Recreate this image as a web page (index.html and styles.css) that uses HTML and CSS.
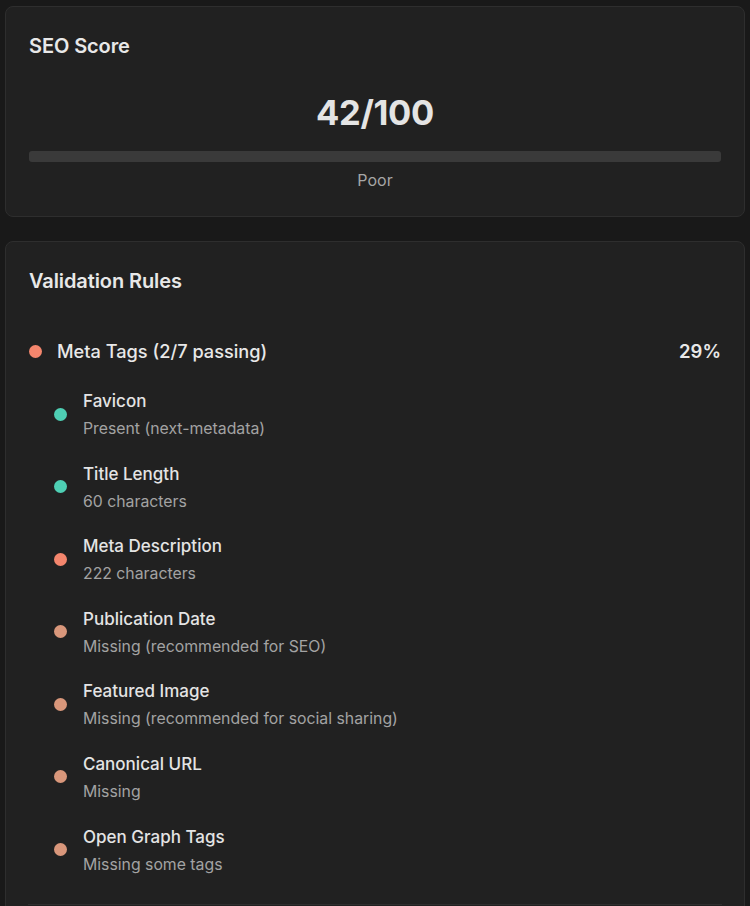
FILE: index.html
```html
<!DOCTYPE html>
<html lang="en">
<head>
<meta charset="utf-8">
<title>SEO</title>
<link rel="stylesheet" href="styles.css">
</head>
<body>
<div class="page">
  <section class="card score-card">
    <h2 class="card-title">SEO Score</h2>
    <div class="score">42/100</div>
    <div class="bar"><div class="bar-fill"></div></div>
    <div class="grade">Poor</div>
  </section>

  <section class="card rules-card">
    <h2 class="card-title">Validation Rules</h2>
    <div class="category">
      <div class="cat-head">
        <span class="dot dot-fail"></span>
        <span class="cat-name">Meta Tags (2/7 passing)</span>
        <span class="cat-pct">29%</span>
      </div>
      <ul class="rules">
        <li class="rule"><span class="dot dot-pass"></span><div class="rule-text"><div class="rule-name">Favicon</div><div class="rule-desc">Present (next-metadata)</div></div></li>
        <li class="rule"><span class="dot dot-pass"></span><div class="rule-text"><div class="rule-name">Title Length</div><div class="rule-desc">60 characters</div></div></li>
        <li class="rule"><span class="dot dot-fail"></span><div class="rule-text"><div class="rule-name">Meta Description</div><div class="rule-desc">222 characters</div></div></li>
        <li class="rule"><span class="dot dot-warn"></span><div class="rule-text"><div class="rule-name">Publication Date</div><div class="rule-desc">Missing (recommended for SEO)</div></div></li>
        <li class="rule"><span class="dot dot-warn"></span><div class="rule-text"><div class="rule-name">Featured Image</div><div class="rule-desc">Missing (recommended for social sharing)</div></div></li>
        <li class="rule"><span class="dot dot-warn"></span><div class="rule-text"><div class="rule-name">Canonical URL</div><div class="rule-desc">Missing</div></div></li>
        <li class="rule"><span class="dot dot-warn"></span><div class="rule-text"><div class="rule-name">Open Graph Tags</div><div class="rule-desc">Missing some tags</div></div></li>
      </ul>
    </div>
    <div class="separator"></div>
  </section>
</div>
</body>
</html>
```
FILE: styles.css
```css
* { box-sizing: border-box; }
html, body {
  margin: 0;
  padding: 0;
  background: #191919;
  height: 100%;
  overflow: hidden;
}
body {
  font-family: Inter, "Noto Sans", "Liberation Sans", sans-serif;
  color: #e4e4e4;
}
.page {
  padding: 6px 5px;
  display: flex;
  flex-direction: column;
  gap: 24px;
}
.card {
  background: #212121;
  border: 1px solid #2e2e2e;
  border-radius: 8px;
  padding: 25px 23px 24px;
}
.card-title {
  margin: 0;
  font-size: 20px;
  line-height: 28px;
  font-weight: 600;
  color: #e8e8e8;
  letter-spacing: -0.1px;
}
.score-card {
  display: flex;
  flex-direction: column;
  align-items: stretch;
  padding-bottom: 26px;
}
.score {
  margin-top: 33px;
  text-align: center;
  font-size: 34.5px;
  line-height: 40px;
  font-weight: 700;
  color: #e4e4e4;
  letter-spacing: -0.3px;
}
.bar {
  margin-top: 18px;
  height: 11px;
  border-radius: 3px;
  background: #3a3a3a;
  overflow: hidden;
}
.bar-fill {
  width: 0;
  height: 100%;
}
.grade {
  margin-top: 8px;
  text-align: center;
  font-size: 16px;
  line-height: 20px;
  color: #a6a6a6;
}
.rules-card {
  padding-bottom: 40px;
}
.category {
  margin-top: 44px;
}
.cat-head {
  display: flex;
  align-items: center;
  height: 24px;
}
.cat-name {
  margin-left: 15px;
  font-size: 18.2px;
  line-height: 24px;
  font-weight: 500;
  color: #e8e8e8;
  flex: 1;
}
.cat-pct {
  font-size: 18.5px;
  line-height: 24px;
  font-weight: 600;
  color: #e8e8e8;
}
.dot {
  width: 13px;
  height: 13px;
  border-radius: 50%;
  flex: none;
}
.dot-fail { background: #f4866d; }
.dot-pass { background: #4ecfb4; }
.dot-warn { background: #d9977b; }
.rules {
  list-style: none;
  margin: 26px 0 0;
  padding: 0 0 0 25px;
  display: flex;
  flex-direction: column;
  gap: 22.6px;
}
.rule {
  display: flex;
  align-items: center;
  gap: 16px;
}
.rule-name {
  font-size: 17px;
  line-height: 24px;
  font-weight: 500;
  color: #e4e4e4;
}
.rule-desc {
  margin-top: 6px;
  font-size: 15.8px;
  line-height: 20px;
  color: #a3a3a3;
}
.separator {
  margin-top: 29px;
  margin-left: -1px;
  margin-right: -1px;
  border-top: 1px solid #2e2e2e;
  height: 40px;
}
```
